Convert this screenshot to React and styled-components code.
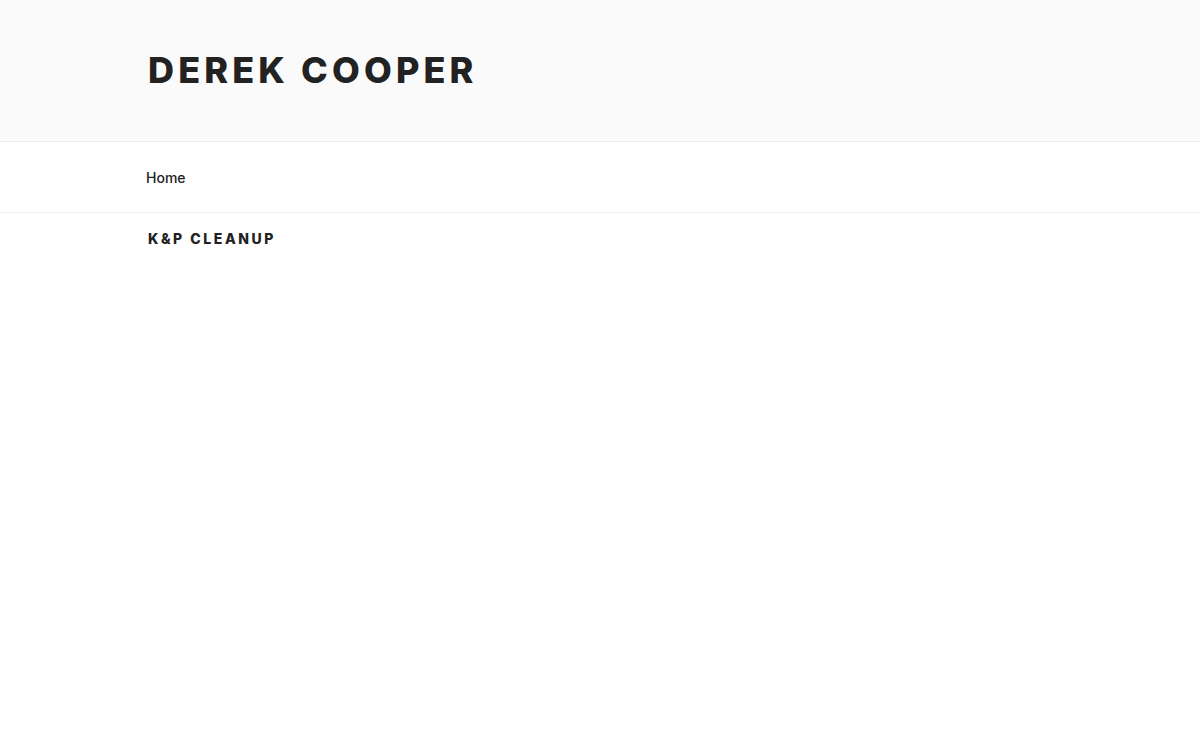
import React from "react";
import styled, { createGlobalStyle } from "styled-components";

const Global = createGlobalStyle`
  body {
    margin: 0;
    background: #fff;
    font-family: Inter, "Liberation Sans", Arial, sans-serif;
    color: #222;
  }
`;

const Masthead = styled.header`
  background: #fafafa;
  border-bottom: 1px solid #eee;
  height: 141px;
  display: flex;
  align-items: center;
`;

const Wrap = styled.div`
  width: 100%;
  max-width: 904px;
  padding: 0 148px;
  box-sizing: content-box;
`;

const SiteTitle = styled.h1`
  margin: 0;
  font-size: 36px;
  font-weight: 800;
  letter-spacing: 0.115em;
  line-height: 1.25;
  text-transform: uppercase;
  color: #222;
`;

const Nav = styled.nav`
  border-bottom: 1px solid #eee;
  height: 70px;
  display: flex;
  align-items: center;
`;

const NavLink = styled.a`
  display: inline-block;
  margin: 2px 0 0 -2px;
  font-size: 14px;
  font-weight: 500;
  color: #222;
  text-decoration: none;
`;

const Content = styled.main`
  padding-top: 17px;
`;

const PageTitle = styled.h2`
  margin: 0;
  font-size: 14px;
  font-weight: 800;
  letter-spacing: 0.183em;
  text-transform: uppercase;
  color: #222;
`;

export default function App() {
  return (
    <>
      <Global />
      <Masthead>
        <Wrap>
          <SiteTitle>Derek Cooper</SiteTitle>
        </Wrap>
      </Masthead>
      <Nav>
        <Wrap>
          <NavLink href="#">Home</NavLink>
        </Wrap>
      </Nav>
      <Content>
        <Wrap>
          <PageTitle>K&amp;P Cleanup</PageTitle>
        </Wrap>
      </Content>
    </>
  );
}
